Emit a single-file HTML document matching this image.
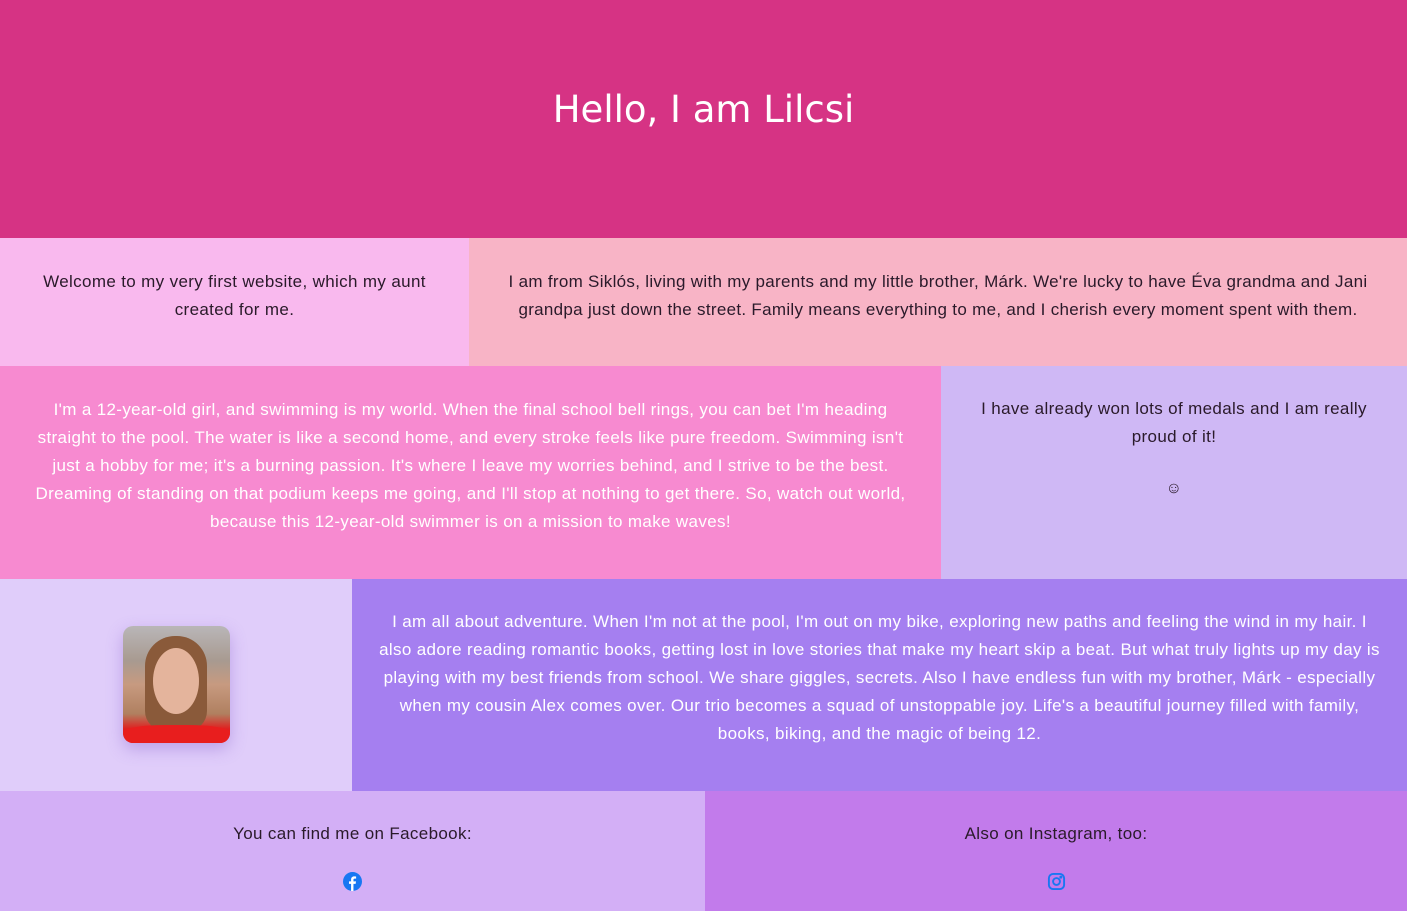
<!DOCTYPE html>
<html><head><meta charset="utf-8"><style>
*{margin:0;padding:0;box-sizing:border-box}
body{width:1407px;height:911px;overflow:hidden;font-family:"Liberation Sans",sans-serif;font-size:17px;letter-spacing:0.35px;line-height:28px;color:#2a1a2a}
.r{display:flex;width:1407px}
.c{display:flex;flex-direction:column;align-items:center;justify-content:center;text-align:center;padding:0 22px}
h1{height:238px;background:#d63384;color:#fff;font-family:"DejaVu Sans",sans-serif;font-weight:normal;font-size:37px;letter-spacing:0;text-align:center;padding-top:96px}
.w{color:#fff}
</style></head><body>
<h1>Hello, I am Lilcsi</h1>
<div class="r" style="height:128px">
<div class="c" style="width:469px;background:#f9b9ee;padding:0 36px 12px">Welcome to my very first website, which my aunt created for me.</div>
<div class="c" style="width:938px;background:#f8b4c6;padding:0 12px 12px;letter-spacing:0.3px">I am from Siklós, living with my parents and my little brother, Márk. We're lucky to have Éva grandma and Jani grandpa just down the street. Family means everything to me, and I cherish every moment spent with them.</div>
</div>
<div class="r" style="height:213px">
<div class="c w" style="width:941px;background:#f78ad0;padding:0 26px 14px">I'm a 12-year-old girl, and swimming is my world. When the final school bell rings, you can bet I'm heading straight to the pool. The water is like a second home, and every stroke feels like pure freedom. Swimming isn't just a hobby for me; it's a burning passion. It's where I leave my worries behind, and I strive to be the best. Dreaming of standing on that podium keeps me going, and I'll stop at nothing to get there. So, watch out world, because this 12-year-old swimmer is on a mission to make waves!</div>
<div class="c" style="width:466px;background:#cfb8f5;padding:0 34px;justify-content:flex-start;padding-top:29px">I have already won lots of medals and I am really proud of it!<div style="margin-top:24px;font-size:16px">☺</div></div>
</div>
<div class="r" style="height:212px">
<div class="c" style="width:352px;background:#e0cdfa;padding-bottom:2px"><div style="width:107px;height:117px;border-radius:10px;background:linear-gradient(#b9b6b8 0,#a89a90 30%,#c79a80 50%,#b08060 75%,#e02020 88%,#e82020 100%);box-shadow:0 6px 16px rgba(120,80,200,.35);position:relative;overflow:hidden"><div style="position:absolute;left:22px;top:10px;width:62px;height:95px;border-radius:30px 30px 20px 20px;background:#8a5a3a"></div><div style="position:absolute;left:30px;top:22px;width:46px;height:66px;border-radius:50%;background:#e4b49c"></div><div style="position:absolute;left:0;bottom:0;width:107px;height:18px;background:#e81e1e;border-radius:40% 40% 0 0"></div></div></div>
<div class="c w" style="width:1055px;background:#a57ff0;padding:0 24px 14px">I am all about adventure. When I'm not at the pool, I'm out on my bike, exploring new paths and feeling the wind in my hair. I also adore reading romantic books, getting lost in love stories that make my heart skip a beat. But what truly lights up my day is playing with my best friends from school. We share giggles, secrets. Also I have endless fun with my brother, Márk - especially when my cousin Alex comes over. Our trio becomes a squad of unstoppable joy. Life's a beautiful journey filled with family, books, biking, and the magic of being 12.</div>
</div>
<div class="r" style="height:120px">
<div class="c" style="width:705px;background:#d3aff6;justify-content:flex-start;padding-top:29px">You can find me on Facebook:<svg style="margin-top:24px" width="19" height="19" viewBox="0 0 20 20"><circle cx="10" cy="10" r="10" fill="#1877f2"/><path d="M11 20V12.5h2.3l.4-2.6H11V8.3c0-.8.3-1.3 1.4-1.3h1.4V4.7c-.3 0-1.1-.1-2-.1-2 0-3.3 1.2-3.3 3.4v1.9H6.3v2.6h2.2V20z" fill="#fff"/></svg></div>
<div class="c" style="width:702px;background:#c27beb;justify-content:flex-start;padding-top:29px">Also on Instagram, too:<svg style="margin-top:24px" width="19" height="19" viewBox="0 0 20 20" fill="none" stroke="#1877f2" stroke-width="2"><rect x="2" y="2" width="16" height="16" rx="4.5"/><circle cx="10" cy="10" r="3.6"/><circle cx="14.6" cy="5.4" r=".6" fill="#1877f2"/></svg></div>
</div>
</body></html>
